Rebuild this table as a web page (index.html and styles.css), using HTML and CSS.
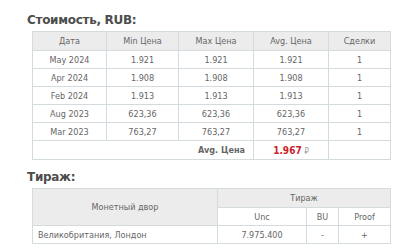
FILE: index.html
```html
<!DOCTYPE html>
<html lang="ru">
<head>
<meta charset="utf-8">
<link rel="stylesheet" href="styles.css">
</head>
<body>
<div class="page">
  <h2 class="title">Стоимость, RUB:</h2>
  <table class="grid prices">
    <colgroup>
      <col style="width:74px"><col style="width:72px"><col style="width:75px"><col style="width:75px"><col>
    </colgroup>
    <thead>
      <tr class="head"><th>Дата</th><th>Min Цена</th><th>Max Цена</th><th>Avg. Цена</th><th>Сделки</th></tr>
    </thead>
    <tbody>
      <tr><td>May 2024</td><td>1.921</td><td>1.921</td><td>1.921</td><td>1</td></tr>
      <tr><td>Apr 2024</td><td>1.908</td><td>1.908</td><td>1.908</td><td>1</td></tr>
      <tr><td>Feb 2024</td><td>1.913</td><td>1.913</td><td>1.913</td><td>1</td></tr>
      <tr><td>Aug 2023</td><td>623,36</td><td>623,36</td><td>623,36</td><td>1</td></tr>
      <tr><td>Mar 2023</td><td>763,27</td><td>763,27</td><td>763,27</td><td>1</td></tr>
      <tr class="avg"><td colspan="3" class="avg-label">Avg. Цена</td><td><span class="avg-value">1.967</span> <span class="rub">₽</span></td><td></td></tr>
    </tbody>
  </table>
  <h2 class="title second">Тираж:</h2>
  <table class="grid mint">
    <colgroup>
      <col style="width:185px"><col style="width:89px"><col style="width:32px"><col>
    </colgroup>
    <thead>
      <tr class="head"><th rowspan="2" class="tall">Монетный двор</th><th colspan="3">Тираж</th></tr>
      <tr><th class="sub">Unc</th><th class="sub">BU</th><th class="sub">Proof</th></tr>
    </thead>
    <tbody>
      <tr><td class="left">Великобритания, Лондон</td><td>7.975.400</td><td>-</td><td>+</td></tr>
    </tbody>
  </table>
</div>
</body>
</html>
```

FILE: styles.css
```css
html, body {
  margin: 0;
  padding: 0;
  background: #ffffff;
}
.page {
  padding: 14px 0 0 27px;
  font-family: "DejaVu Sans Condensed", "DejaVu Sans", sans-serif;
  color: #666666;
}
.title {
  margin: 0 0 4px 0;
  font-size: 12px;
  line-height: 13px;
  font-weight: bold;
  color: #4d4d4d;
  font-family: "DejaVu Sans", sans-serif;
  letter-spacing: -0.3px;
}
.title.second {
  margin-top: 11px;
}
.grid {
  margin-left: 5px;
  width: 359px;
  border-collapse: collapse;
  table-layout: fixed;
  font-size: 9px;
}
.grid th, .grid td {
  border: 1px solid #d3dbde;
  text-align: center;
  padding: 0;
  height: 17px;
  font-weight: normal;
  white-space: nowrap;
}
.grid .head th {
  background: #ececec;
  height: 18px;
}
.grid .tall {
  background: #ececec;
}
.avg td {
  height: 18px;
}
.avg-label {
  text-align: right !important;
  padding-right: 8px !important;
  font-weight: bold !important;
  color: #666666;
}
.avg-value {
  color: #cc2229;
  font-weight: bold;
  font-size: 10px;
}
.rub {
  color: #999999;
  font-size: 8px;
}
.grid td.left {
  text-align: left;
  padding-left: 5px;
}
```
